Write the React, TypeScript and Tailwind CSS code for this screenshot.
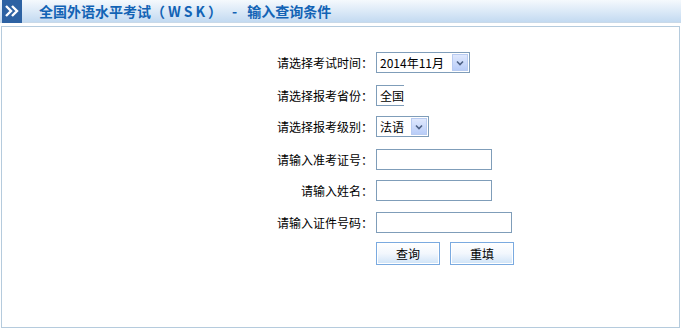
const font = { fontFamily: '"Noto Sans CJK SC", "Liberation Sans", sans-serif' };

const Arrow = () => (
  <div className="flex h-[17px] w-[16px] items-center justify-center border border-[#b8cbf1] bg-gradient-to-b from-[#dfe8fd] to-[#b9cdf8]">
    <svg width="8" height="6" viewBox="0 0 8 6">
      <path d="M1 1.5 L4 4.5 L7 1.5" fill="none" stroke="#4d6185" strokeWidth="1.6" />
    </svg>
  </div>
);

const Row = ({ label, mt, children }: { label: string; mt: string; children: React.ReactNode }) => (
  <div className={`flex items-center ${mt}`}>
    <div className="w-[120px] text-right text-[12px] leading-none text-black">{label}</div>
    <div className="ml-[3px]">{children}</div>
  </div>
);

const Input = ({ w }: { w: string }) => (
  <div className={`h-[21px] ${w} border border-[#7f9db9] bg-white`} />
);

const Btn = ({ text }: { text: string }) => (
  <button className="flex h-[23px] w-[64px] items-center justify-center border border-[#7aaae0] bg-gradient-to-b from-white via-[#f2f7fd] to-[#cfe3f7] text-[12px] leading-none text-black shadow-[inset_0_0_0_1px_#ffffff]">
    {text}
  </button>
);

export default function App() {
  return (
    <div className="h-[330px] w-[681px] bg-white" style={font}>
      <div className="flex h-[23px] items-center border-b border-[#c9d9e8] bg-gradient-to-b from-[#f5f9fd] to-[#c3daf1]">
        <div className="ml-[2px] flex h-[23px] w-[20px] items-center justify-center bg-[#2d62a3]">
          <svg width="16" height="12" viewBox="0 0 16 12">
            <path d="M2 1 L7 6 L2 11 M8 1 L13 6 L8 11" fill="none" stroke="#ffffff" strokeWidth="2.4" />
          </svg>
        </div>
        <div className="ml-[17px] flex items-center whitespace-pre text-[14px] font-bold leading-none text-[#1263b5]">
          <span>全国外语水平考试（</span>
          <span className="tracking-[3px] pl-[3px]">WSK</span>
          <span>）</span>
          <span className="px-[10px]">-</span>
          <span>输入查询条件</span>
        </div>
      </div>
      <div className="mx-[1px] mt-[3px] h-[302px] border border-[#b5cbdd] pl-[251px] pt-[25px]">
        <Row label="请选择考试时间：" mt="mt-0">
          <div className="flex h-[21px] w-[94px] items-center justify-between border border-[#7f9db9] bg-white pl-[3px] pr-[1px]">
            <span className="text-[12px] leading-none text-black">2014年11月</span>
            <Arrow />
          </div>
        </Row>
        <Row label="请选择报考省份：" mt="mt-[12px]">
          <div className="flex h-[21px] w-[28px] items-center overflow-hidden border border-r-0 border-[#7f9db9] bg-white pl-[3px]">
            <span className="whitespace-nowrap text-[12px] leading-none text-black">全国</span>
          </div>
        </Row>
        <Row label="请选择报考级别：" mt="mt-[10px]">
          <div className="flex h-[21px] w-[53px] items-center justify-between border border-[#7f9db9] bg-white pl-[3px] pr-[1px]">
            <span className="text-[12px] leading-none text-black">法语</span>
            <Arrow />
          </div>
        </Row>
        <Row label="请输入准考证号：" mt="mt-[12px]">
          <Input w="w-[116px]" />
        </Row>
        <Row label="请输入姓名：" mt="mt-[10px]">
          <Input w="w-[116px]" />
        </Row>
        <Row label="请输入证件号码：" mt="mt-[11px]">
          <Input w="w-[136px]" />
        </Row>
        <div className="ml-[123px] mt-[9px] flex gap-[10px]">
          <Btn text="查询" />
          <Btn text="重填" />
        </div>
      </div>
    </div>
  );
}
